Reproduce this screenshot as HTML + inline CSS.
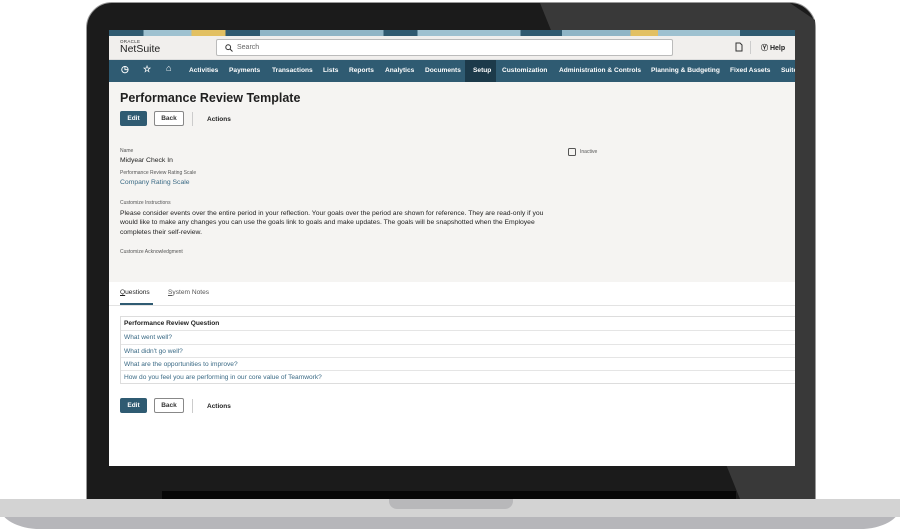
<!DOCTYPE html>
<html><head><meta charset="utf-8"><style>
*{margin:0;padding:0;box-sizing:border-box}
body{width:900px;height:529px;background:#fff;position:relative;overflow:hidden;font-family:"Liberation Sans",sans-serif}
.bez{position:absolute;left:86px;top:2px;width:730px;height:510px;background:#1b1b1b;border-radius:26px 26px 0 0;border:1px solid #999;overflow:hidden}
.refl{position:absolute;left:0;top:0;width:900px;height:529px;background:#393939}
.strip{position:absolute;left:162px;top:491px;width:574px;height:10px;background:#070707}
.base{position:absolute;left:0;top:499px;width:900px;height:30px;background:#b6b6ba;border-radius:0 0 40px 40px/0 0 22px 22px}
.base1{position:absolute;left:0;top:499px;width:900px;height:18px;background:#d3d3d3}
.notch{position:absolute;left:389px;top:499px;width:124px;height:10px;background:#b8b8ba;border-radius:0 0 8px 8px}
.scr{position:absolute;left:109px;top:30px;width:686px;height:436px;background:#fff;overflow:hidden;font-size:7px;color:#222}
.banner{height:6px;background:linear-gradient(90deg,#2f5a70 0 5%,#9ec1d0 5% 12%,#e2c062 12% 17%,#2f5a70 17% 22%,#8fb5c6 22% 40%,#2f5a70 40% 45%,#9ec1d0 45% 60%,#2f5a70 60% 66%,#8fb5c6 66% 76%,#e2c062 76% 80%,#9ec1d0 80% 92%,#2f5a70 92% 100%)}
.hdr{height:24px;background:#f1efed;position:relative;border-bottom:1px solid #ddd}
.logo{position:absolute;left:11px;top:3px}
.logo .o{font-size:4.5px;letter-spacing:.3px;color:#333}
.logo .n{font-size:10.5px;color:#222;line-height:10px}
.search{position:absolute;left:107px;top:3px;width:457px;height:17px;background:#fff;border:1px solid #bbb;border-radius:2px;font-size:7px;color:#666;padding:4px 0 0 20px}
.search svg{position:absolute;left:8px;top:4px}
.help{position:absolute;left:652px;top:7px;font-size:7px;font-weight:bold}
.nav{height:22px;background:#2f5b72;color:#fff;font-size:6.6px;font-weight:bold;white-space:nowrap;position:relative}
.nav span{position:absolute;top:7px}
.setup{position:absolute;left:356px;top:0;width:31px;height:22px;background:#1c3a4a}
.main{background:#f5f4f2;height:200px;position:relative}
h1{position:absolute;left:11px;top:9px;font-size:12.5px;font-weight:bold;color:#1f1f1f}
.btn{position:absolute;height:15px;font-size:6.5px;border-radius:2px;text-align:center;padding-top:4px;font-weight:bold}
.edit{background:#2f5b72;color:#fff;width:27px}
.back{background:#fff;border:1px solid #888;color:#333;width:30px;padding-top:3px}
.sep{position:absolute;width:1px;height:14px;background:#ccc}
.lbl{position:absolute;left:11px;font-size:5px;color:#555}
.val{position:absolute;left:11px;font-size:6.8px;color:#222}
.lnk{color:#3a6a85}
.tabs{position:absolute;left:0;top:252px;width:686px;height:24px;border-bottom:1px solid #e3e3e3;background:#fff}
.tbl{position:absolute;left:11px;top:286px;width:690px;border:1px solid #ddd}
.tbl div{height:13.3px;border-top:1px solid #e5e5e5;padding:3px 0 0 3px;font-size:6.6px;color:#3a6a85}
.tbl div:first-child{border-top:0;color:#222;font-weight:bold}
</style></head><body>
<div class="bez"></div>
<div class="refl" style="clip-path:polygon(540px 3px,790px 3px,815px 20px,815px 499px,740px 499px)"></div>
<div class="strip"></div>
<div class="base"></div><div class="base1"></div><div class="notch"></div>
<div class="scr">
<div class="banner"></div>
<div class="hdr">
<div class="logo"><div class="o">ORACLE</div><div class="n">NetSuite</div></div>
<div class="search"><svg width="8" height="8" viewBox="0 0 8 8"><circle cx="3.2" cy="3.2" r="2.4" fill="none" stroke="#333" stroke-width="1"/><path d="M5 5l2.5 2.5" stroke="#333" stroke-width="1"/></svg>Search</div>
<svg style="position:absolute;left:626px;top:6px" width="8" height="10" viewBox="0 0 8 10"><path d="M1 1h4l2 2v6H1z" fill="none" stroke="#333" stroke-width="1"/></svg>
<div style="position:absolute;left:641px;top:5px;width:1px;height:13px;background:#ccc"></div>
<div class="help">&#9422; Help</div>
</div>
<div class="nav">
<div class="setup"></div>
<span style="left:12px;font-size:9px;top:4px">&#9719;</span>
<span style="left:34px;font-size:9px;top:4px">&#9734;</span>
<span style="left:57px;font-size:9px;top:3px">&#8962;</span>
<span style="left:80px">Activities</span><span style="left:120px">Payments</span><span style="left:163px">Transactions</span><span style="left:214px">Lists</span><span style="left:240px">Reports</span><span style="left:276px">Analytics</span><span style="left:316px">Documents</span><span style="left:364px">Setup</span><span style="left:393px">Customization</span><span style="left:450px">Administration &amp; Controls</span><span style="left:542px">Planning &amp; Budgeting</span><span style="left:621px">Fixed Assets</span><span style="left:672px">Suite</span>
</div>
<div class="main">
<h1>Performance Review Template</h1>
</div>
<div class="btn edit" style="left:11px;top:81px">Edit</div>
<div class="btn back" style="left:45px;top:81px">Back</div>
<div class="sep" style="left:83px;top:82px"></div>
<div style="position:absolute;left:98px;top:86px;font-size:6.5px;font-weight:bold">Actions</div>
<div class="lbl" style="top:118px">Name</div>
<div class="val" style="top:127px">Midyear Check In</div>
<div class="lbl" style="top:140px">Performance Review Rating Scale</div>
<div class="val lnk" style="top:149px">Company Rating Scale</div>
<div class="lbl" style="top:170px">Customize Instructions</div>
<div class="val" style="top:179px;width:440px;line-height:9.3px">Please consider events over the entire period in your reflection. Your goals over the period are shown for reference. They are read-only if you would like to make any changes you can use the goals link to goals and make updates. The goals will be snapshotted when the Employee completes their self-review.</div>
<div class="lbl" style="top:219px">Customize Acknowledgment</div>
<div style="position:absolute;left:459px;top:118px;width:8px;height:8px;border:1px solid #555;border-radius:1.5px"></div>
<div class="lbl" style="left:471px;top:119px">Inactive</div>
<div class="tabs">
<div style="position:absolute;left:11px;top:7px;font-size:6.6px;color:#222"><u>Q</u>uestions</div>
<div style="position:absolute;left:11px;top:21px;width:33px;height:2px;background:#2f5b72"></div>
<div style="position:absolute;left:59px;top:7px;font-size:6.6px;color:#555"><u>S</u>ystem Notes</div>
</div>
<div class="tbl">
<div>Performance Review Question</div><div>What went well?</div><div>What didn't go well?</div><div>What are the opportunities to improve?</div><div>How do you feel you are performing in our core value of Teamwork?</div>
</div>
<div class="btn edit" style="left:11px;top:368px">Edit</div>
<div class="btn back" style="left:45px;top:368px">Back</div>
<div class="sep" style="left:83px;top:369px"></div>
<div style="position:absolute;left:98px;top:373px;font-size:6.5px;font-weight:bold">Actions</div>
</div>
</body></html>
